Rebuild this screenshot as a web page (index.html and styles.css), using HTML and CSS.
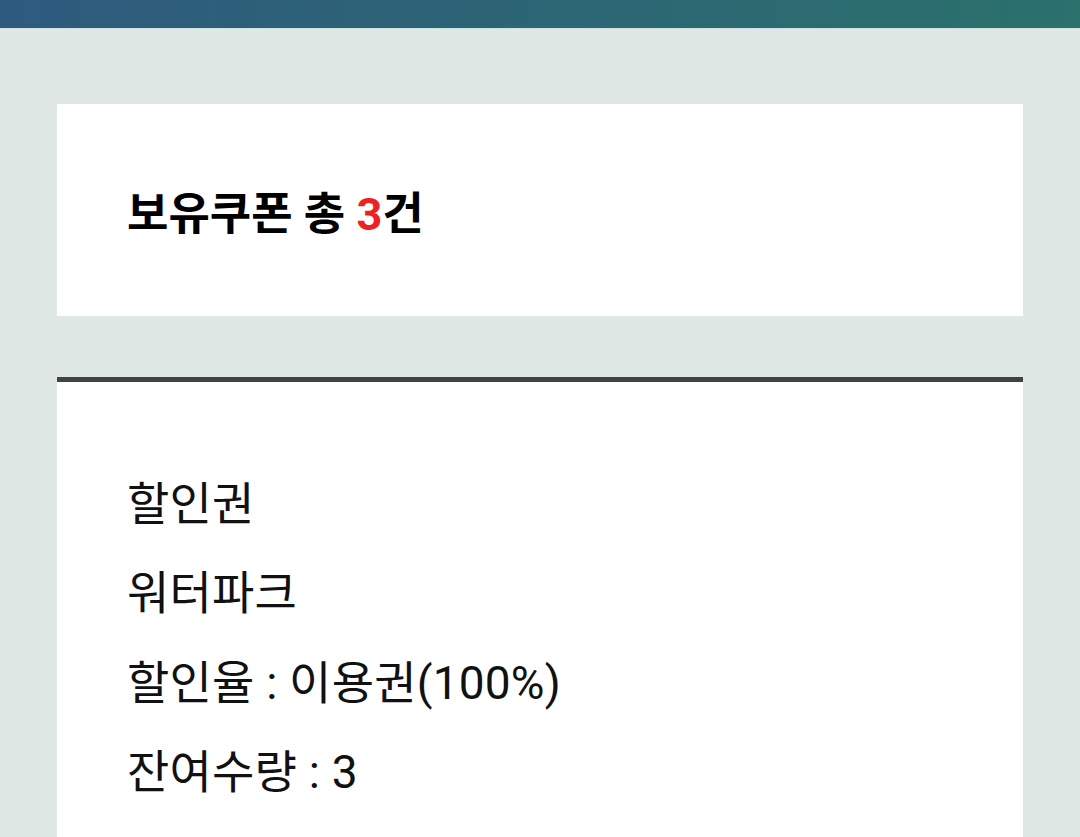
FILE: index.html
```html
<!DOCTYPE html>
<html lang="ko">
<head>
    <meta charset="UTF-8">
    <meta name="viewport" content="width=device-width, initial-scale=1.0">
    <title>보유쿠폰</title>
    <link rel="stylesheet" href="styles.css">
</head>
<body>
    <div class="topbar"></div>

    <main class="page">
        <section class="summary">
            <h1>보유쿠폰 총 <span class="count">3</span>건</h1>
        </section>

        <section class="coupon">
            <p>할인권</p>
            <p>워터파크</p>
            <p>할인율 : 이용권(100%)</p>
            <p>잔여수량 : 3</p>
        </section>
    </main>
</body>
</html>
```

FILE: styles.css
```css
body {
    margin: 0;
    background-color: #dfe8e4;
    font-family: Roboto, "Noto Sans CJK KR", sans-serif;
    color: #111;
}
.topbar {
    height: 28px;
    background: linear-gradient(to right, #2e5a7e, #2b716c);
    border-bottom: 1px solid #cfe0e0;
}
.page {
    padding: 75px 57px 0;
}
.summary {
    background-color: #fff;
    height: 212px;
    padding-left: 70px;
    display: flex;
    align-items: center;
}
.summary h1 {
    margin: 0;
    font-size: 45px;
    font-weight: bold;
    color: #000;
}
.count {
    color: #ee2222;
}
.coupon {
    margin-top: 61px;
    background-color: #fff;
    border-top: 5px solid #424242;
    padding: 78px 70px 40px;
}
.coupon p {
    margin: 0;
    font-size: 46px;
    letter-spacing: 0.2px;
    line-height: 89.3px;
}
```
